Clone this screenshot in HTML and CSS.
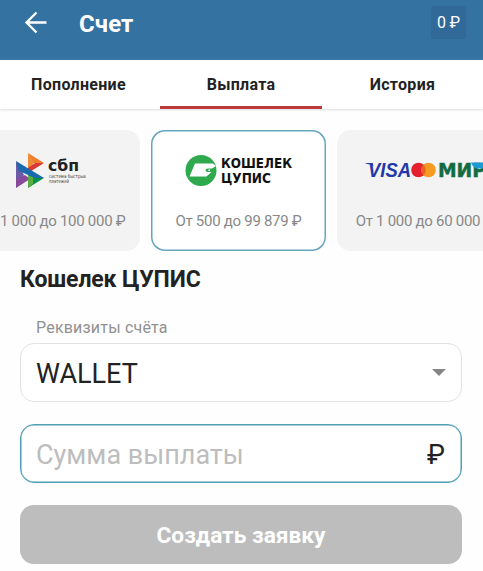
FILE: index.html
```html
<!DOCTYPE html>
<html lang="ru">
  <head>
    <meta charset="UTF-8" />
    <title>Счет</title>
    <link rel="stylesheet" href="styles.css">
  </head>
  <body>
    <header>
      <a href="#" class="back">
        <svg width="24" height="24" viewBox="0 0 24 24">
          <path d="M22.5 11.5H2.5M12.5 1.5l-10 10 10 10" fill="none" stroke="#fff" stroke-width="2.3" />
        </svg>
      </a>
      <h1>Счет</h1>
      <span class="balance">0 ₽</span>
    </header>

    <nav>
      <a href="#">Пополнение</a>
      <a href="#" class="active">Выплата</a>
      <a href="#">История</a>
    </nav>

    <div class="methods">
      <div class="method">
        <svg class="logo" width="175" height="44" viewBox="0 0 175 44">
          <path d="M51 8l8 14-8 13z" fill="#6d5aa5" />
          <path d="M51 35v-8l9-5 5 4z" fill="#8a4a9c" />
          <path d="M63 0l16 10H68z" fill="#ee7f2d" />
          <path d="M63 0v17l6-7z" fill="#f08c35" />
          <path d="M79 10L63 20v-5l7-5z" fill="#d93a35" />
          <path d="M63 20l16 5-16 10z" fill="#0b9247" />
          <path d="M63 22v13l5-4v-7z" fill="#58ad43" />
          <path d="M51 8l28 17h-9L54 18z" fill="#1b69ad" />
          <text class="sbp" x="83" y="18" textLength="31" lengthAdjust="spacingAndGlyphs">сбп</text>
          <text class="sbp-small" x="84" y="25" textLength="37" lengthAdjust="spacingAndGlyphs">система быстрых</text>
          <text class="sbp-small" x="84" y="29.5" textLength="20" lengthAdjust="spacingAndGlyphs">платежей</text>
        </svg>
        <span class="limit">От 1 000 до 100 000 ₽</span>
      </div>

      <div class="method selected">
        <svg class="logo" width="175" height="44" viewBox="0 0 175 44">
          <circle cx="50" cy="17.5" r="15.5" fill="#2fa94e" />
          <path d="M44 10.5h18l3 2.5-4 2.5h-4q-2.500 0-2.500 1.700t2.500 1.700h3.500l-5 4.600H38.500z" fill="#fff" />
          <circle cx="58.200" cy="17.200" r=".9" fill="#fff" />
          <text class="cupis" x="70" y="15" textLength="71" lengthAdjust="spacingAndGlyphs">КОШЕЛЕК</text>
          <text class="cupis" x="70" y="30" textLength="50" lengthAdjust="spacingAndGlyphs">ЦУПИС</text>
        </svg>
        <span class="limit">От 500 до 99 879 ₽</span>
      </div>

      <div class="method">
        <svg class="logo" width="175" height="44" viewBox="0 0 175 44">
          <path d="M28.5 10h7l1 3q-3-2-8-2.5z" fill="#2437a8" />
          <text class="visa" x="31" y="24" textLength="43" lengthAdjust="spacingAndGlyphs">VISA</text>
          <circle cx="81.5" cy="17" r="7.3" fill="#e3202b" />
          <circle cx="91.5" cy="17" r="7.3" fill="#f59b22" />
          <path d="M86.5 11.7a7.3 7.3 0 0 1 0 10.6a7.3 7.3 0 0 1 0-10.6z" fill="#ee5f25" />
          <text class="mir" x="101" y="24" textLength="48" lengthAdjust="spacingAndGlyphs">МИР</text>
          <path d="M134 9.5h12q6 0 5 6h-10q-5 0-7-6z" fill="#1d9ad3" />
        </svg>
        <span class="limit">От 1 000 до 60 000 ₽</span>
      </div>
    </div>

    <form>
      <h2>Кошелек ЦУПИС</h2>
      <div class="label">Реквизиты счёта</div>
      <div class="field">
        <span class="value">WALLET</span>
        <span class="arrow"></span>
      </div>
      <div class="field focused">
        <span class="placeholder">Сумма выплаты</span>
        <span class="currency">₽</span>
      </div>
      <button type="button">Создать заявку</button>
    </form>
  </body>
</html>
```
FILE: styles.css
```css
* {
  box-sizing: border-box;
}

body {
  margin: 0;
  height: 571px;
  overflow: hidden;
  background: #fefefe;
  color: #222;
  font-family: Roboto, "Liberation Sans", sans-serif;
}

a {
  color: inherit;
  text-decoration: none;
}

header {
  display: flex;
  align-items: center;
  height: 60px;
  padding: 0 17px 15px 24px;
  background: #3472a1;
  color: #fff;
}

.back,
.back svg {
  display: block;
}

h1 {
  flex: 1;
  margin: 2px 0 0 31px;
  font-size: 24px;
  line-height: 28px;
  letter-spacing: 0.1px;
}

.balance {
  width: 35px;
  height: 33px;
  border-radius: 3px;
  background: #316998;
  font-size: 16px;
  line-height: 34px;
  letter-spacing: -0.2px;
  text-align: center;
}

nav {
  display: grid;
  grid-template-columns: 160px 162px 1fr;
  height: 49px;
  background: #fff;
  box-shadow: 0 1px 2px #ddd;
}

nav a {
  height: 49px;
  padding: 3px 3px 0 0;
  border-bottom: 3px solid transparent;
  font-size: 16px;
  font-weight: 700;
  line-height: 44px;
  letter-spacing: 0.3px;
  text-align: center;
}

nav a:last-child {
  padding-right: 0;
}

nav .active {
  padding-right: 0;
  border-color: #bd3a3b;
}

.methods {
  display: flex;
  justify-content: center;
  gap: 11px;
  margin-top: 21px;
  padding-right: 6px;
  overflow: hidden;
}

.method {
  display: flex;
  flex: none;
  flex-direction: column;
  align-items: center;
  width: 175px;
  height: 121px;
  padding-top: 23px;
  border-radius: 14px;
  background: #f3f3f3;
}

.method.selected {
  background: #fff;
  box-shadow: inset 0 0 0 1.5px #66a5be;
}

.logo {
  display: block;
}

.limit {
  margin-top: 14px;
  color: #888;
  font-size: 15px;
  line-height: 20px;
  letter-spacing: -0.28px;
  white-space: nowrap;
}

.sbp {
  fill: #222;
  font: 700 15.5px "DejaVu Sans", sans-serif;
}

.sbp-small {
  fill: #333;
  font: 5px "DejaVu Sans", sans-serif;
}

.cupis {
  fill: #111;
  font: 700 14px "DejaVu Sans", sans-serif;
}

.visa {
  fill: #2437a8;
  font: italic 700 20px "Liberation Sans", sans-serif;
}

.mir {
  fill: #126b43;
  stroke: #126b43;
  stroke-width: 0.5px;
  font: 700 19.5px "DejaVu Sans", sans-serif;
}

form {
  padding: 15px 21px 0 20px;
}

h2 {
  margin: 0;
  font-size: 23px;
  line-height: 28px;
  letter-spacing: -0.15px;
}

.label {
  margin: 24px 0 5px 16px;
  color: #919191;
  font-size: 16px;
  line-height: 20px;
  letter-spacing: 0.2px;
}

.field {
  display: flex;
  align-items: center;
  justify-content: space-between;
  height: 59px;
  margin-bottom: 22px;
  padding: 3px 16px 0 15px;
  border: 1px solid #e2e2e2;
  border-radius: 14px;
  background: #fff;
  font-size: 27px;
}

.field.focused {
  border-color: #4f9eb5;
  box-shadow: inset 0 0 0 0.5px #4f9eb5;
}

.arrow {
  border: 7px solid transparent;
  border-top-color: #858585;
  border-bottom: 0;
  margin: 0 -1px 3px 0;
}

.placeholder {
  color: #bdbdbd;
}

button {
  display: block;
  width: 100%;
  height: 59px;
  padding: 2px 0 0;
  border: 0;
  border-radius: 14px;
  background: #bdbdbd;
  color: #fff;
  font: 700 22.7px Roboto, sans-serif;
}
```
